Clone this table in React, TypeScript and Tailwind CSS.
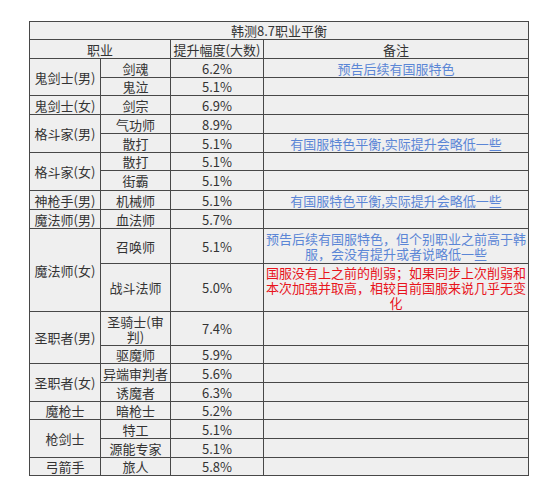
import React from 'react';

type Row = {
  group?: string;
  span?: number;
  job: React.ReactNode;
  rate: string;
  note?: React.ReactNode;
  tone?: 'blue' | 'red';
  h: string;
};

const rows: Row[] = [
  { group: '鬼剑士(男)', span: 2, job: '剑魂', rate: '6.2%', note: '预告后续有国服特色', tone: 'blue', h: 'h-[19px]' },
  { job: '鬼泣', rate: '5.1%', h: 'h-[18px]' },
  { group: '鬼剑士(女)', span: 1, job: '剑宗', rate: '6.9%', h: 'h-[19px]' },
  { group: '格斗家(男)', span: 2, job: '气功师', rate: '8.9%', h: 'h-[19px]' },
  { job: '散打', rate: '5.1%', note: '有国服特色平衡,实际提升会略低一些', tone: 'blue', h: 'h-[19px]' },
  { group: '格斗家(女)', span: 2, job: '散打', rate: '5.1%', h: 'h-[18px]' },
  { job: '街霸', rate: '5.1%', h: 'h-[20px]' },
  { group: '神枪手(男)', span: 1, job: '机械师', rate: '5.1%', note: '有国服特色平衡,实际提升会略低一些', tone: 'blue', h: 'h-[19px]' },
  { group: '魔法师(男)', span: 1, job: '血法师', rate: '5.7%', h: 'h-[19px]' },
  {
    group: '魔法师(女)',
    span: 2,
    job: '召唤师',
    rate: '5.1%',
    note: (
      <>
        预告后续有国服特色，但个别职业之前高于韩
        <br />
        服，会没有提升或者说略低一些
      </>
    ),
    tone: 'blue',
    h: 'h-[35px]',
  },
  {
    job: '战斗法师',
    rate: '5.0%',
    note: (
      <>
        国服没有上之前的削弱；如果同步上次削弱和
        <br />
        本次加强并取高，相较目前国服来说几乎无变
        <br />
        化
      </>
    ),
    tone: 'red',
    h: 'h-[48px]',
  },
  {
    group: '圣职者(男)',
    span: 2,
    job: (
      <>
        圣骑士(审
        <br />
        判)
      </>
    ),
    rate: '7.4%',
    h: 'h-[34px]',
  },
  { job: '驱魔师', rate: '5.9%', h: 'h-[18px]' },
  { group: '圣职者(女)', span: 2, job: '异端审判者', rate: '5.6%', h: 'h-[19px]' },
  { job: '诱魔者', rate: '6.3%', h: 'h-[19px]' },
  { group: '魔枪士', span: 1, job: '暗枪士', rate: '5.2%', h: 'h-[18px]' },
  { group: '枪剑士', span: 2, job: '特工', rate: '5.1%', h: 'h-[19px]' },
  { job: '源能专家', rate: '5.1%', h: 'h-[19px]' },
  { group: '弓箭手', span: 1, job: '旅人', rate: '5.8%', h: 'h-[18px]' },
];

const cell = 'border border-[#484848] p-0 text-center align-middle';

export default function App() {
  return (
    <div className="w-[554px] h-[502px] bg-white pt-[21px] pl-[29px]">
      <table
        className="table-fixed border-collapse w-[499px] bg-[#efefef] text-[13px] leading-[15px] text-[#333]"
        style={{ fontFamily: '"Noto Sans CJK SC", "Noto Sans", sans-serif' }}
      >
        <colgroup>
          <col className="w-[71px]" />
          <col className="w-[70px]" />
          <col className="w-[93px]" />
          <col className="w-[265px]" />
        </colgroup>
        <tbody>
          <tr className="h-[18px]">
            <td colSpan={4} className={cell}>
              韩测8.7职业平衡
            </td>
          </tr>
          <tr className="h-[19px]">
            <td colSpan={2} className={cell}>
              职业
            </td>
            <td className={cell}>提升幅度(大数)</td>
            <td className={cell}>备注</td>
          </tr>
          {rows.map((r, i) => (
            <tr key={i} className={r.h}>
              {r.group && (
                <td rowSpan={r.span} className={cell}>
                  {r.group}
                </td>
              )}
              <td className={cell}>{r.job}</td>
              <td className={cell}>{r.rate}</td>
              <td
                className={`${cell} ${
                  r.tone === 'red' ? 'text-[#e8141c]' : r.tone === 'blue' ? 'text-[#5b86d6]' : ''
                }`}
              >
                {r.note}
              </td>
            </tr>
          ))}
        </tbody>
      </table>
    </div>
  );
}
